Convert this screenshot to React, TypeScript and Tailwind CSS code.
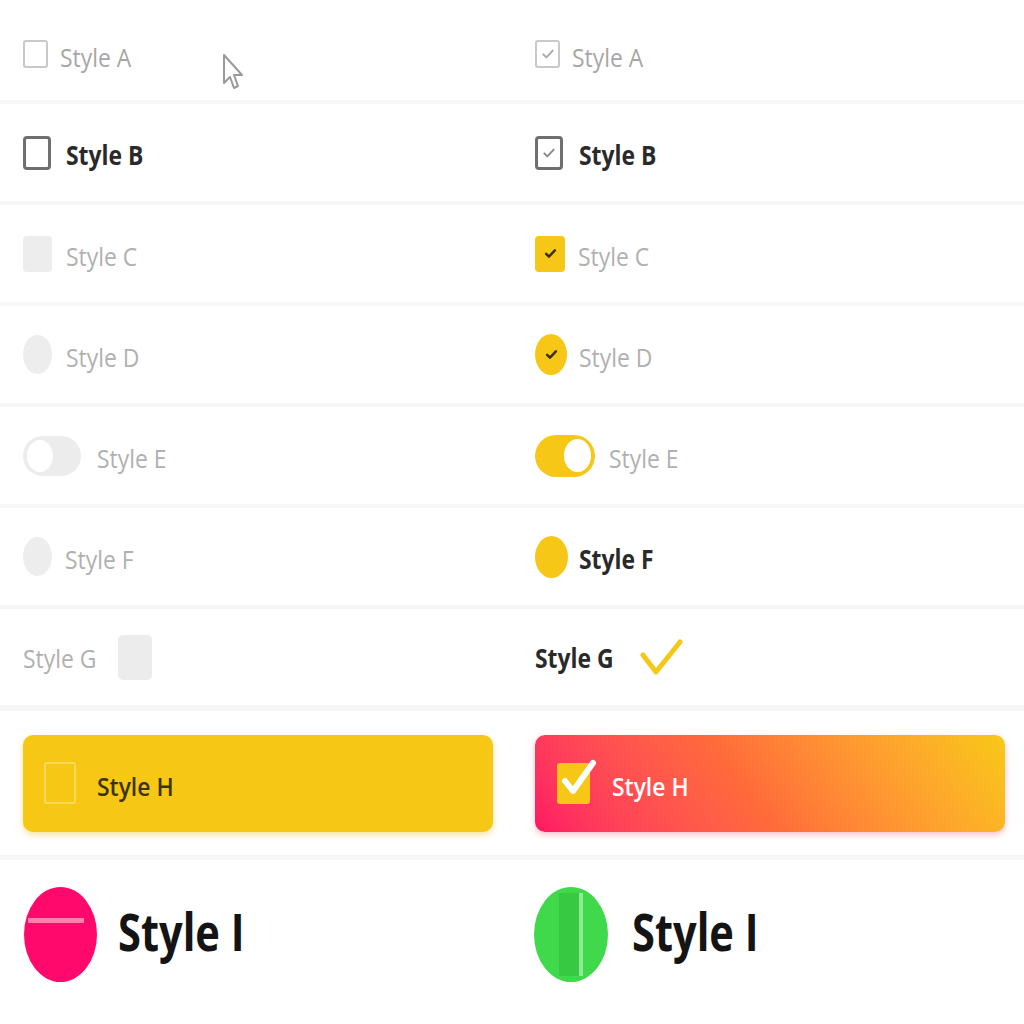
import React from "react";

const small = "inline-block origin-left scale-x-88 whitespace-nowrap text-[26px] leading-none pt-[5px]";
const muted = "text-[#b0b0b0]";
const strong = "font-bold text-[#2a2a2a]";

const Tick = ({ className = "", color = "#999", width = 3 }: { className?: string; color?: string; width?: number }) => (
  <svg viewBox="0 0 24 24" className={className} fill="none">
    <path d="M5 12.5l4.5 4.5L19 7" stroke={color} strokeWidth={width} strokeLinecap="round" strokeLinejoin="round" />
  </svg>
);

const Label = ({ children, className = "" }: { children: React.ReactNode; className?: string }) => (
  <span className={`${small} ${className}`}>{children}</span>
);

const Row = ({ children, className = "" }: { children: React.ReactNode; className?: string }) => (
  <div className={`grid grid-cols-2 border-b-4 border-[#f6f6f6] ${className}`}>{children}</div>
);

const Cell = ({ children, className = "" }: { children: React.ReactNode; className?: string }) => (
  <div className={`flex items-center pl-[23px] ${className}`}>{children}</div>
);

const Cursor = () => (
  <svg viewBox="0 0 24 38" className="absolute left-[222px] top-[45px] w-[24px] h-[38px]" fill="none">
    <path d="M2 2 L2 30 L8 24 L12 35 L16 33 L12 22 L20 22 Z" fill="#fff" stroke="#9a9a9a" strokeWidth="2" strokeLinejoin="round" />
  </svg>
);

export default function App() {
  return (
    <div className="w-[1024px] h-[1024px] bg-white overflow-hidden font-['Open_Sans',sans-serif]">
      {/* A */}
      <Row className="h-[104px] pt-[8px]">
        <Cell className="relative">
          <div className="w-[25px] h-[28px] rounded-[3px] border-2 border-[#c9c9c9]" />
          <Label className={`ml-[12px] text-[#a6a6a6]`}>Style A</Label>
          <Cursor />
        </Cell>
        <Cell>
          <div className="w-[25px] h-[28px] rounded-[3px] border-2 border-[#c9c9c9] flex items-center justify-center">
            <Tick className="w-[16px] h-[16px]" color="#aaaaaa" width={3} />
          </div>
          <Label className={`ml-[12px] text-[#a6a6a6]`}>Style A</Label>
        </Cell>
      </Row>

      {/* B */}
      <Row className="h-[101px]">
        <Cell>
          <div className="w-[28px] h-[34px] rounded-[4px] border-[3px] border-[#6f6f6f]" />
          <Label className={`ml-[15px] ${strong}`}>Style B</Label>
        </Cell>
        <Cell>
          <div className="w-[28px] h-[34px] rounded-[4px] border-[3px] border-[#6f6f6f] flex items-center justify-center">
            <Tick className="w-[16px] h-[16px]" color="#8a8a8a" width={3} />
          </div>
          <Label className={`ml-[16px] ${strong}`}>Style B</Label>
        </Cell>
      </Row>

      {/* C */}
      <Row className="h-[101px]">
        <Cell>
          <div className="w-[29px] h-[36px] rounded-[4px] bg-[#ededed]" />
          <Label className={`ml-[14px] ${muted}`}>Style C</Label>
        </Cell>
        <Cell>
          <div className="w-[30px] h-[36px] rounded-[4px] bg-[#f6c717] flex items-center justify-center">
            <Tick className="w-[15px] h-[15px]" color="#3a3000" width={4} />
          </div>
          <Label className={`ml-[13px] ${muted}`}>Style C</Label>
        </Cell>
      </Row>

      {/* D */}
      <Row className="h-[101px]">
        <Cell>
          <div className="w-[29px] h-[39px] rounded-[50%] bg-[#ededed]" />
          <Label className={`ml-[14px] ${muted}`}>Style D</Label>
        </Cell>
        <Cell>
          <div className="w-[32px] h-[41px] rounded-[50%] bg-[#f6c717] flex items-center justify-center">
            <Tick className="w-[15px] h-[15px]" color="#3a3000" width={4} />
          </div>
          <Label className={`ml-[12px] ${muted}`}>Style D</Label>
        </Cell>
      </Row>

      {/* E */}
      <Row className="h-[101px]">
        <Cell>
          <div className="w-[58px] h-[40px] rounded-full bg-[#ececec] p-[4px] flex items-center">
            <div className="w-[26px] h-[32px] rounded-[50%] bg-white" />
          </div>
          <Label className={`ml-[16px] ${muted}`}>Style E</Label>
        </Cell>
        <Cell>
          <div className="w-[60px] h-[42px] rounded-full bg-[#f6c717] p-[4px] flex items-center justify-end">
            <div className="w-[27px] h-[33px] rounded-[50%] bg-white" />
          </div>
          <Label className={`ml-[14px] ${muted}`}>Style E</Label>
        </Cell>
      </Row>

      {/* F */}
      <Row className="h-[101px]">
        <Cell>
          <div className="w-[29px] h-[39px] rounded-[50%] bg-[#ededed]" />
          <Label className={`ml-[13px] ${muted}`}>Style F</Label>
        </Cell>
        <Cell>
          <div className="w-[33px] h-[42px] rounded-[50%] bg-[#f6c717]" />
          <Label className={`ml-[11px] ${strong}`}>Style F</Label>
        </Cell>
      </Row>

      {/* G */}
      <Row className="h-[102px] border-b-[6px]">
        <Cell>
          <div className="w-[95px]">
            <Label className={muted}>Style G</Label>
          </div>
          <div className="w-[34px] h-[45px] rounded-[5px] bg-[#ececec]" />
        </Cell>
        <Cell>
          <div className="w-[104px]">
            <Label className={strong}>Style G</Label>
          </div>
          <svg viewBox="0 0 44 38" className="w-[44px] h-[38px]" fill="none">
            <path d="M4 17 L17 34 L41 4" stroke="#f6c717" strokeWidth="5" strokeLinecap="round" strokeLinejoin="round" />
          </svg>
        </Cell>
      </Row>

      {/* H */}
      <Row className="h-[149px] border-b-[5px]">
        <Cell className="pr-[19px]">
          <div className="w-full h-[97px] rounded-[10px] bg-[#f6c815] shadow-[0_3px_6px_rgba(240,196,40,0.45)] flex items-center pl-[21px]">
            <div className="w-[32px] h-[42px] rounded-[3px] border-2 border-[#f9da55]" />
            <Label className="ml-[21px] font-semibold text-[#3b3300]">Style H</Label>
          </div>
        </Cell>
        <Cell className="pr-[19px]">
          <div className="w-full h-[97px] rounded-[10px] bg-linear-55 from-[#ff1464] via-[#ff6b3a] via-45% to-[#f8c815] shadow-[0_3px_6px_rgba(255,80,110,0.35)] flex items-center pl-[22px]">
            <div className="relative w-[33px] h-[41px] rounded-[3px] bg-[#f6c717]">
              <svg viewBox="0 0 40 44" className="absolute left-[2px] top-[-4px] w-[40px] h-[44px] overflow-visible" fill="none">
                <path d="M6 22 L14 32 L34 4" stroke="#ffffff" strokeWidth="6" strokeLinecap="round" strokeLinejoin="round" />
              </svg>
            </div>
            <Label className="ml-[22px] font-semibold text-white">Style H</Label>
          </div>
        </Cell>
      </Row>

      {/* I */}
      <div className="grid grid-cols-2 h-[164px]">
        <div className="flex items-start pl-[24px] pt-[27px]">
          <div className="relative w-[73px] h-[95px] rounded-[50%] bg-[#ff0a6c] overflow-hidden">
            <div className="absolute left-[4px] top-[31px] w-[56px] h-[5px] bg-[#ff80aa]" />
          </div>
          <span className="ml-[21px] mt-[18px] inline-block origin-left scale-x-80 whitespace-nowrap text-[52px] leading-none font-bold text-[#141414]">
            Style I
          </span>
        </div>
        <div className="flex items-start pl-[22px] pt-[27px]">
          <div className="relative w-[74px] h-[95px] rounded-[50%] bg-[#40d94b] overflow-hidden">
            <div className="absolute left-[25px] top-[6px] w-[20px] h-[83px] bg-[#38c943]" />
            <div className="absolute left-[45px] top-[6px] w-[4px] h-[83px] bg-[#8cec94]" />
          </div>
          <span className="ml-[24px] mt-[18px] inline-block origin-left scale-x-80 whitespace-nowrap text-[52px] leading-none font-bold text-[#141414]">
            Style I
          </span>
        </div>
      </div>
    </div>
  );
}
